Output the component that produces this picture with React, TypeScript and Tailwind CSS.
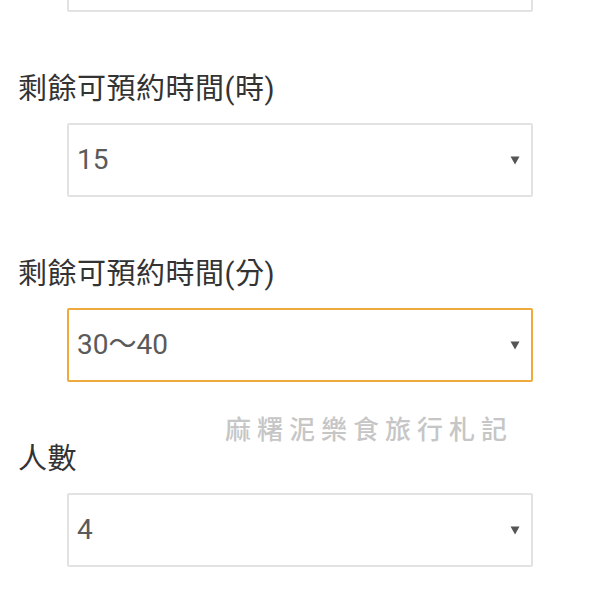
import React from 'react';

const font = { fontFamily: '"Roboto", "Noto Sans CJK TC", sans-serif' };

interface SelectBoxProps {
  value?: string;
  focused?: boolean;
}

function SelectBox({ value = '', focused = false }: SelectBoxProps) {
  return (
    <div
      className={`ml-[49px] flex h-[74px] w-[466px] items-center justify-between bg-white pl-[8px] pr-[11px] rounded-[2px] ${
        focused ? 'border-2 border-[#eeaa3c]' : 'border-2 border-[#e2e2e2]'
      }`}
    >
      <span className="text-[28px] leading-none text-[#5a5a5a]">{value}</span>
      <svg width="10" height="9" viewBox="0 0 10 9" className="shrink-0">
        <path d="M0.5 0.5 H9.5 L5 8.5 Z" fill="#555555" />
      </svg>
    </div>
  );
}

function Field({ label, value, focused }: { label: string; value: string; focused?: boolean }) {
  return (
    <div className="mt-[61px] flex flex-col">
      <div className="text-[29px] leading-[32px] tracking-[0.5px] text-[#333333]">{label}</div>
      <div className="mt-[18px]">
        <SelectBox value={value} focused={focused} />
      </div>
    </div>
  );
}

export default function App() {
  return (
    <div className="relative h-[600px] w-[600px] overflow-hidden bg-white" style={font}>
      <div className="-mt-[62px] flex flex-col px-[18px]">
        <SelectBox value="" />
        <Field label="剩餘可預約時間(時)" value="15" />
        <Field label="剩餘可預約時間(分)" value="30～40" focused />
        <Field label="人數" value="4" />
      </div>
      <div className="absolute left-[225px] top-[414px] text-[26px] leading-[32px] tracking-[6px] font-medium text-[#c6c6c6]">
        麻糬泥樂食旅行札記
      </div>
    </div>
  );
}
